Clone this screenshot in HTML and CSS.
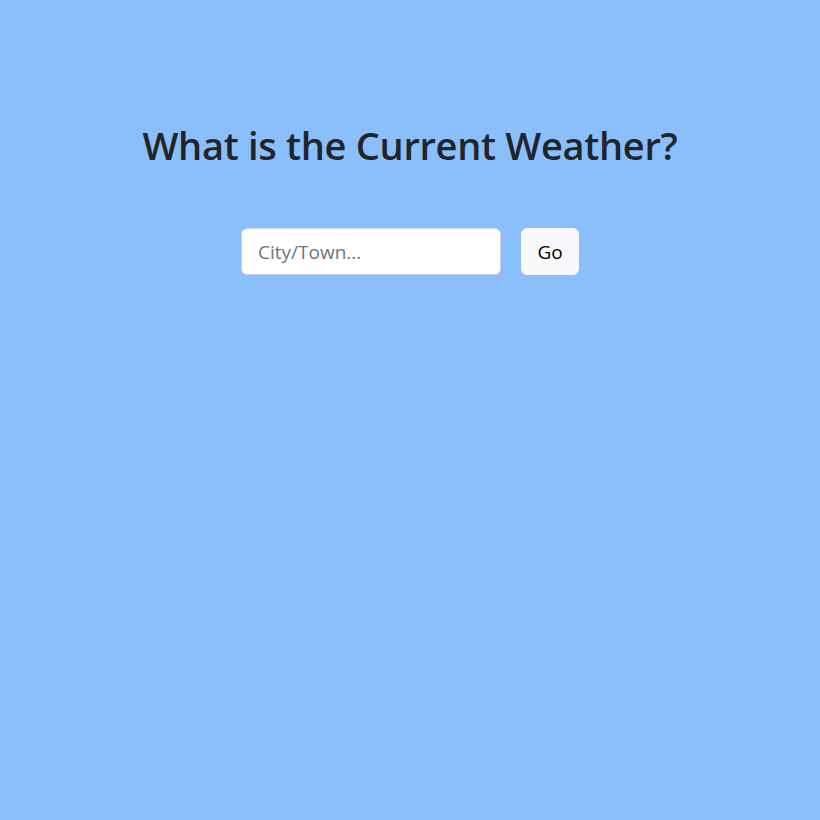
FILE: index.html
```html
<!DOCTYPE html>
<html lang="en">
<head>
<meta charset="utf-8">
<title>Weather</title>
<link rel="stylesheet" href="styles.css">
</head>
<body>
<main class="page">
  <h1 class="title">What is the Current Weather?</h1>
  <form class="search">
    <input class="city" type="text" placeholder="City/Town...">
    <button class="go" type="button">Go</button>
  </form>
</main>
</body>
</html>
```

FILE: styles.css
```css
html, body {
  margin: 0;
  padding: 0;
  height: 100%;
}
body {
  background: #8bbffb;
  font-family: "Open Sans", "Noto Sans", sans-serif;
  color: #212529;
}
.page {
  display: flex;
  flex-direction: column;
  align-items: center;
  padding-top: 118px;
}
.title {
  margin: 0;
  font-size: 38px;
  font-weight: 600;
  line-height: 54px;
  letter-spacing: -0.3px;
}
.search {
  display: flex;
  gap: 20px;
  margin-top: 56px;
}
.city {
  box-sizing: border-box;
  width: 260px;
  height: 47px;
  padding: 0 16px;
  border: 1px solid #ced4da;
  border-radius: 6px;
  background: #fff;
  font-family: inherit;
  font-size: 19px;
  color: #495057;
  outline: none;
}
.city::placeholder {
  color: #6c757d;
}
.go {
  box-sizing: border-box;
  width: 58px;
  height: 47px;
  padding: 0;
  border: 1px solid #f8f9fa;
  border-radius: 6px;
  background: #f8f9fa;
  font-family: inherit;
  font-size: 19px;
  color: #000;
}
```
